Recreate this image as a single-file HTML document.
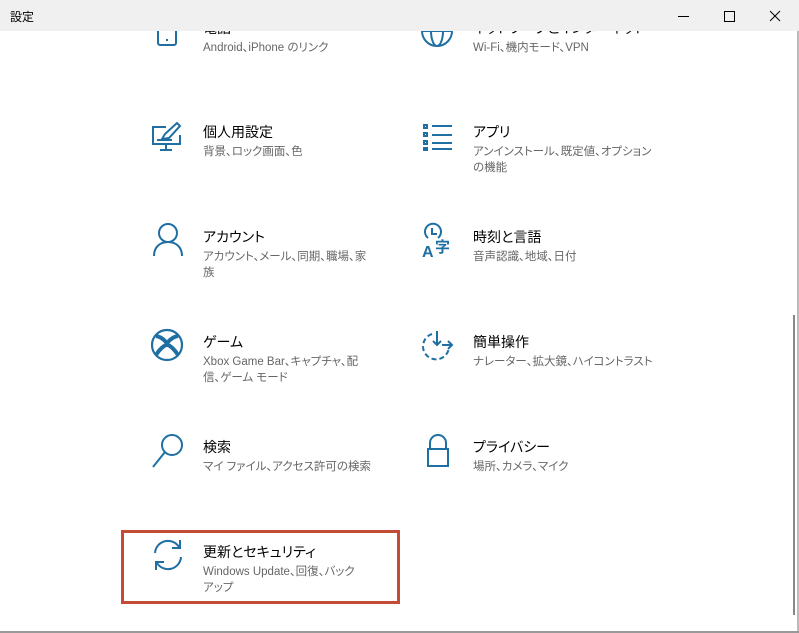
<!DOCTYPE html><html><head><meta charset="utf-8"><style>
body{margin:0;width:799px;height:633px;overflow:hidden;background:#fff;font-family:"Liberation Sans","Noto Sans CJK JP",sans-serif;position:relative;font-feature-settings:"palt"}
.tb{position:absolute;left:0;top:0;width:799px;height:31px;background:#f0f0f0;z-index:5}
.tb .t{position:absolute;left:10px;top:8px;font-size:12px;color:#000}
.it{position:absolute}
.it .h{position:absolute;left:0;top:0;font-size:14px;color:#000;white-space:nowrap}
.it .s{position:absolute;left:0;top:22px;font-size:11.5px;color:#666;line-height:16px;white-space:nowrap}
svg.ic{position:absolute;fill:none;stroke:#1f6fa3;stroke-width:2}
</style></head><body>
<div class="tb"><span class="t">設定</span>
<svg style="position:absolute;left:670px;top:8px" width="120" height="16" fill="none" stroke="#000" stroke-width="1"><line x1="8" y1="8.5" x2="19" y2="8.5"/><rect x="54.5" y="3.5" width="10" height="10"/><line x1="100" y1="3" x2="110" y2="13"/><line x1="110" y1="3" x2="100" y2="13"/></svg></div>

<svg class="ic" style="left:155px;top:14px" width="30" height="36"><rect x="3" y="0" width="18" height="31" rx="2"/><line x1="11" y1="26" x2="13" y2="26"/></svg>
<div class="it" style="left:203px;top:18px"><div class="h">電話</div><div class="s">Android、iPhone のリンク</div></div>
<svg class="ic" style="left:420px;top:14px" width="36" height="36"><circle cx="17" cy="17" r="15"/><line x1="2" y1="17" x2="32" y2="17"/><ellipse cx="17" cy="17" rx="6" ry="15"/></svg>
<div class="it" style="left:473px;top:18px"><div class="h">ネットワークとインターネット</div><div class="s">Wi-Fi、機内モード、VPN</div></div>

<svg class="ic" style="left:150px;top:122px" width="36" height="30"><path d="M16 5H3v17h27v-9"/><line x1="16" y1="22" x2="16" y2="28"/><line x1="10" y1="28" x2="22" y2="28"/><path d="M12 17l3-5 12-11 3 3-11 12z"/><line x1="7" y1="18" x2="22" y2="18"/></svg>
<div class="it" style="left:203px;top:122px"><div class="h">個人用設定</div><div class="s">背景、ロック画面、色</div></div>
<svg class="ic" style="left:420px;top:122px" width="36" height="30"><rect x="4" y="3" width="3" height="3"/><rect x="4" y="11" width="3" height="3"/><rect x="4" y="19" width="3" height="3"/><rect x="4" y="26" width="3" height="2"/><line x1="12" y1="4" x2="32" y2="4"/><line x1="12" y1="13" x2="32" y2="13"/><line x1="12" y1="21" x2="32" y2="21"/><line x1="12" y1="27" x2="32" y2="27"/></svg>
<div class="it" style="left:473px;top:122px"><div class="h">アプリ</div><div class="s">アンインストール、既定値、オプション<br>の機能</div></div>

<svg class="ic" style="left:150px;top:222px" width="36" height="36"><circle cx="18" cy="11" r="9"/><path d="M4 34c0-9 6-14 14-14s14 5 14 14"/></svg>
<div class="it" style="left:203px;top:227px"><div class="h">アカウント</div><div class="s">アカウント、メール、同期、職場、家<br>族</div></div>
<svg class="ic" style="left:420px;top:222px" width="40" height="38"><path d="M8 16a8 8 0 1 1 10 0"/><path d="M12 6v6h5"/><text x="2" y="35" font-size="16" fill="#1f6fa3" stroke="none" font-weight="bold">A</text><text x="15" y="30" font-size="15" fill="#1f6fa3" stroke="none" font-weight="bold">字</text></svg>
<div class="it" style="left:473px;top:227px"><div class="h">時刻と言語</div><div class="s">音声認識、地域、日付</div></div>

<svg class="ic" style="left:150px;top:327px" width="36" height="36"><circle cx="17" cy="18" r="15" stroke-width="2.2"/><path d="M6 9c6 1 11 6 11 9M28 9c-6 1-11 6-11 9M6 28c3-5 8-10 11-10M28 28c-3-5-8-10-11-10" stroke-width="4"/></svg>
<div class="it" style="left:203px;top:332px"><div class="h">ゲーム</div><div class="s">Xbox Game Bar、キャプチャ、配<br>信、ゲーム モード</div></div>
<svg class="ic" style="left:420px;top:327px" width="40" height="36"><path d="M12 7a13 13 0 1 0 17 13" stroke-dasharray="5 3"/><path d="M17 4v14M13 14l4 4 4-4M22 18h10M28 14l4 4-4 4"/></svg>
<div class="it" style="left:473px;top:332px"><div class="h">簡単操作</div><div class="s">ナレーター、拡大鏡、ハイコントラスト</div></div>

<svg class="ic" style="left:150px;top:432px" width="36" height="38"><circle cx="22" cy="13" r="10"/><line x1="15" y1="20" x2="3" y2="35"/></svg>
<div class="it" style="left:203px;top:437px"><div class="h">検索</div><div class="s">マイ ファイル、アクセス許可の検索</div></div>
<svg class="ic" style="left:420px;top:432px" width="36" height="38"><path d="M10 17v-6a8 8 0 0 1 16 0v6"/><rect x="8" y="17" width="20" height="17"/></svg>
<div class="it" style="left:473px;top:437px"><div class="h">プライバシー</div><div class="s">場所、カメラ、マイク</div></div>

<div style="position:absolute;left:121px;top:530px;width:273px;height:68px;border:3px solid #c44b35"></div>
<svg class="ic" style="left:150px;top:537px" width="36" height="36"><path d="M5 16A13 13 0 0 1 29 10"/><path d="M30 3v8h-8"/><path d="M31 20A13 13 0 0 1 7 26"/><path d="M6 33v-8h8"/></svg>
<div class="it" style="left:203px;top:542px"><div class="h">更新とセキュリティ</div><div class="s">Windows Update、回復、バック<br>アップ</div></div>

<div style="position:absolute;left:793px;top:315px;width:2px;height:300px;background:#888"></div>
<div style="position:absolute;left:797px;top:0;width:2px;height:633px;background:#bbb"></div>
<div style="position:absolute;left:0;top:631px;width:799px;height:2px;background:#999"></div>
</body></html>
